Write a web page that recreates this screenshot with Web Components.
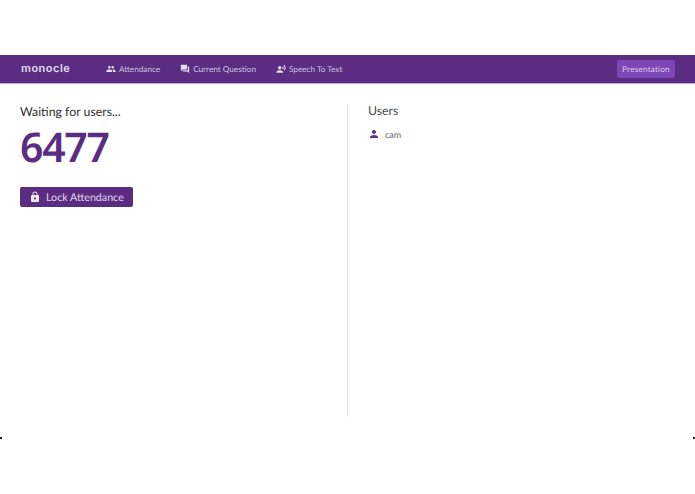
<!DOCTYPE html>
<html>
<head>
<meta charset="utf-8">
<style>
  html, body { margin: 0; background: #fff; }
  body { font-family: Lato, sans-serif; padding-top: 55px; text-rendering: geometricPrecision; }
</style>
</head>
<body>
<app-nav>
  <nav-link icon="people">Attendance</nav-link>
  <nav-link icon="forum">Current Question</nav-link>
  <nav-link icon="voice">Speech To Text</nav-link>
</app-nav>
<attendance-page>
  <waiting-panel slot="left" code="6477"></waiting-panel>
  <users-panel slot="right">
    <user-row>cam</user-row>
  </users-panel>
</attendance-page>
<corner-marks></corner-marks>
<script>
const ICONS = {
  people: "M16 11c1.66 0 2.99-1.34 2.99-3S17.66 5 16 5s-3 1.34-3 3 1.34 3 3 3zm-8 0c1.66 0 2.99-1.34 2.99-3S9.66 5 8 5 5 6.34 5 8s1.34 3 3 3zm0 2c-2.33 0-7 1.17-7 3.5V19h14v-2.5c0-2.33-4.67-3.5-7-3.5zm8 0c-.29 0-.62.02-.97.05 1.16.84 1.97 1.97 1.97 3.45V19h6v-2.5c0-2.33-4.67-3.5-7-3.5z",
  forum: "M21 6h-2v9H6v2c0 .55.45 1 1 1h11l4 4V7c0-.55-.45-1-1-1zm-4 6V3c0-.55-.45-1-1-1H3c-.55 0-1 .45-1 1v14l4-4h10c.55 0 1-.45 1-1z",
  voice: "M9 13c2.21 0 4-1.79 4-4s-1.79-4-4-4-4 1.79-4 4 1.79 4 4 4zm0 2c-2.67 0-8 1.34-8 4v2h16v-2c0-2.66-5.33-4-8-4zm7.76-9.64l-1.68 1.69c.84 1.18.84 2.71 0 3.89l1.68 1.69c2.02-2.02 2.02-5.07 0-7.27zM20.07 2l-1.63 1.63c2.77 3.02 2.77 7.56 0 10.74L20.07 16c3.9-3.89 3.91-9.95 0-14z",
  lock: "M18 8h-1V6c0-2.76-2.24-5-5-5S7 3.24 7 6v2H6c-1.1 0-2 .9-2 2v10c0 1.1.9 2 2 2h12c1.1 0 2-.9 2-2V10c0-1.1-.9-2-2-2zm-6 9c-1.1 0-2-.9-2-2s.9-2 2-2 2 .9 2 2-.9 2-2 2zm3.1-9H8.9V6c0-1.71 1.39-3.1 3.1-3.1 1.71 0 3.1 1.39 3.1 3.1v2z",
  person: "M12 12c2.21 0 4-1.79 4-4s-1.79-4-4-4-4 1.79-4 4 1.79 4 4 4zm0 2c-2.67 0-8 1.34-8 4v2h16v-2c0-2.66-5.33-4-8-4z",
};

function iconSvg(name, size) {
  return `<svg width="${size}" height="${size}" viewBox="0 0 24 24" fill="currentColor"><path d="${ICONS[name]}"/></svg>`;
}

class AppNav extends HTMLElement {
  constructor() {
    super();
    this.attachShadow({ mode: "open" });
    this.shadowRoot.innerHTML = `
      <style>
        :host { display: flex; align-items: center; height: 28px; background: #5a2d82; padding: 0 20px 0 21px; box-sizing: border-box; box-shadow: 0 1px 0 #b9a4cc; }
        .logo { font-family: Inter, sans-serif; font-weight: 600; font-size: 11px; letter-spacing: 0.5px; color: #e3dbec; width: 85px; margin-top: -2px; }
        .links { display: flex; gap: 20px; flex: 1; }
        button { font: 8.2px Lato, sans-serif; letter-spacing: 0.2px; text-rendering: geometricPrecision; color: #dcd0e8; background: #7d45b5; border: 0; border-radius: 2px; height: 18px; width: 58px; padding: 0; }
      </style>
      <div class="logo">monocle</div>
      <div class="links"><slot></slot></div>
      <button>Presentation</button>
    `;
  }
}

class NavLink extends HTMLElement {
  constructor() {
    super();
    this.attachShadow({ mode: "open" });
    this.shadowRoot.innerHTML = `
      <style>
        :host { display: flex; align-items: center; gap: 3px; font-size: 8.2px; color: #cfc0de; white-space: nowrap; }
        svg { color: #e6dfee; display: block; }
      </style>
      ${iconSvg(this.getAttribute("icon"), 10)}<slot></slot>
    `;
  }
}

class AttendancePage extends HTMLElement {
  constructor() {
    super();
    this.attachShadow({ mode: "open" });
    this.shadowRoot.innerHTML = `
      <style>
        :host { display: grid; grid-template-columns: 347px 1fr; height: 354px; }
        .left { padding: 21px 20px 0; }
        .right { margin-top: 21px; height: 313px; border-left: 1px solid #e8e8e8; padding: 0 20px; }
      </style>
      <div class="left"><slot name="left"></slot></div>
      <div class="right"><slot name="right"></slot></div>
    `;
  }
}

class WaitingPanel extends HTMLElement {
  constructor() {
    super();
    this.attachShadow({ mode: "open" });
    this.shadowRoot.innerHTML = `
      <style>
        :host { display: block; }
        h2 { margin: 0; font-size: 12.3px; font-weight: 400; line-height: 16px; color: #2f2f2f; }
        .code { font-family: "Noto Sans", sans-serif; font-size: 41px; font-weight: 600; line-height: 50px; color: #5a2d82; margin-top: 2px; letter-spacing: -1.3px; }
        button { display: flex; align-items: center; gap: 5px; margin-top: 15px; width: 113px; height: 20px; padding: 0 0 0 9px; box-sizing: border-box; border: 0; border-radius: 2px; background: #5a2d82; color: #e0d6ea; font: 10.7px Lato, sans-serif; text-rendering: geometricPrecision; }
        svg { color: #efe9f5; display: block; }
      </style>
      <h2>Waiting for users...</h2>
      <div class="code">${this.getAttribute("code")}</div>
      <button>${iconSvg("lock", 12)}Lock Attendance</button>
    `;
  }
}

class UsersPanel extends HTMLElement {
  constructor() {
    super();
    this.attachShadow({ mode: "open" });
    this.shadowRoot.innerHTML = `
      <style>
        :host { display: block; }
        h3 { margin: 0 0 10px; font-size: 12.3px; font-weight: 400; line-height: 14px; color: #4a4a4a; }
      </style>
      <h3>Users</h3>
      <slot></slot>
    `;
  }
}

class UserRow extends HTMLElement {
  constructor() {
    super();
    this.attachShadow({ mode: "open" });
    this.shadowRoot.innerHTML = `
      <style>
        :host { display: flex; align-items: center; gap: 5px; font-size: 9px; color: #666; height: 12px; }
        svg { color: #5a2d82; display: block; }
      </style>
      ${iconSvg("person", 12)}<slot></slot>
    `;
  }
}

// two small dark ticks at the bottom edge of the app frame
class CornerMarks extends HTMLElement {
  constructor() {
    super();
    this.attachShadow({ mode: "open" });
    this.shadowRoot.innerHTML = `
      <style>
        :host { display: flex; justify-content: space-between; }
        i { width: 2px; height: 2px; background: #222; }
      </style>
      <i></i><i></i>
    `;
  }
}

customElements.define("app-nav", AppNav);
customElements.define("nav-link", NavLink);
customElements.define("attendance-page", AttendancePage);
customElements.define("waiting-panel", WaitingPanel);
customElements.define("users-panel", UsersPanel);
customElements.define("user-row", UserRow);
customElements.define("corner-marks", CornerMarks);
</script>
</body>
</html>
